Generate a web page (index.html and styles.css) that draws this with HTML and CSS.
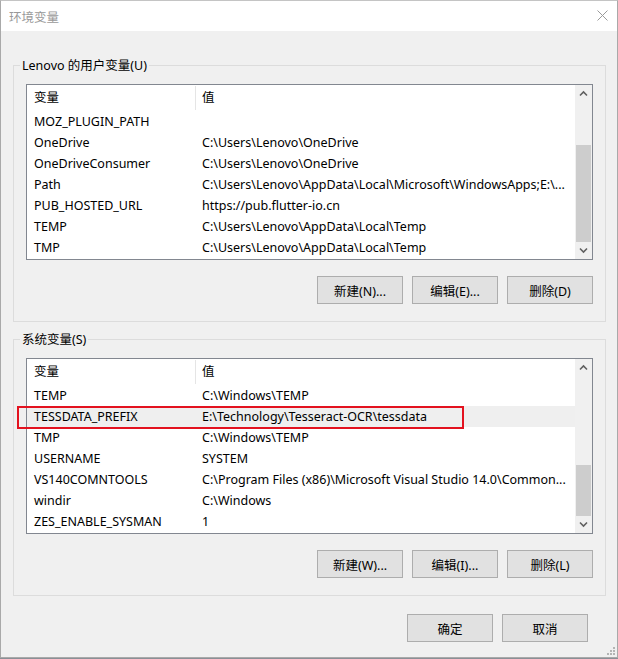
FILE: index.html
```html
<!DOCTYPE html>
<html lang="zh-CN">
<head>
<meta charset="utf-8">
<title>环境变量</title>
<link rel="stylesheet" href="styles.css">
</head>
<body>
<div class="window">
  <div class="titlebar">
    <span class="title">环境变量</span>
    <svg class="close" width="11" height="11" viewBox="0 0 11 11"><path d="M0.5 0.5L10.5 10.5M10.5 0.5L0.5 10.5" stroke="#9a9a9a" stroke-width="1" fill="none"/></svg>
  </div>
  <div class="content">
    <fieldset class="group">
      <legend>Lenovo 的用户变量(U)</legend>
      <div class="list">
        <div class="list-main">
          <div class="list-header"><div class="name">变量</div><div class="value">值</div></div>
          <div class="row"><div class="name">MOZ_PLUGIN_PATH</div><div class="value"></div></div>
          <div class="row"><div class="name">OneDrive</div><div class="value">C:\Users\Lenovo\OneDrive</div></div>
          <div class="row"><div class="name">OneDriveConsumer</div><div class="value">C:\Users\Lenovo\OneDrive</div></div>
          <div class="row"><div class="name">Path</div><div class="value">C:\Users\Lenovo\AppData\Local\Microsoft\WindowsApps;E:\...</div></div>
          <div class="row"><div class="name">PUB_HOSTED_URL</div><div class="value">https://pub.flutter-io.cn</div></div>
          <div class="row"><div class="name">TEMP</div><div class="value">C:\Users\Lenovo\AppData\Local\Temp</div></div>
          <div class="row"><div class="name">TMP</div><div class="value">C:\Users\Lenovo\AppData\Local\Temp</div></div>
        </div>
        <div class="scrollbar">
          <div class="arrow"><svg width="17" height="17" viewBox="0 0 17 17"><path d="M5 10.5L8.5 7L12 10.5" stroke="#606060" stroke-width="1.6" fill="none"/></svg></div>
          <div class="track"><div class="thumb" style="height:97px"></div></div>
          <div class="arrow"><svg width="17" height="17" viewBox="0 0 17 17"><path d="M5 6.5L8.5 10L12 6.5" stroke="#606060" stroke-width="1.6" fill="none"/></svg></div>
        </div>
      </div>
      <div class="buttons">
        <button class="btn">新建(N)...</button>
        <button class="btn">编辑(E)...</button>
        <button class="btn">删除(D)</button>
      </div>
    </fieldset>

    <fieldset class="group group-system">
      <legend>系统变量(S)</legend>
      <div class="list">
        <div class="list-main">
          <div class="list-header"><div class="name">变量</div><div class="value">值</div></div>
          <div class="row"><div class="name">TEMP</div><div class="value">C:\Windows\TEMP</div></div>
          <div class="row selected"><div class="name">TESSDATA_PREFIX</div><div class="value">E:\Technology\Tesseract-OCR\tessdata</div><div class="mark"></div></div>
          <div class="row"><div class="name">TMP</div><div class="value">C:\Windows\TEMP</div></div>
          <div class="row"><div class="name">USERNAME</div><div class="value">SYSTEM</div></div>
          <div class="row"><div class="name">VS140COMNTOOLS</div><div class="value">C:\Program Files (x86)\Microsoft Visual Studio 14.0\Common...</div></div>
          <div class="row"><div class="name">windir</div><div class="value">C:\Windows</div></div>
          <div class="row"><div class="name">ZES_ENABLE_SYSMAN</div><div class="value">1</div></div>
        </div>
        <div class="scrollbar">
          <div class="arrow"><svg width="17" height="17" viewBox="0 0 17 17"><path d="M5 10.5L8.5 7L12 10.5" stroke="#606060" stroke-width="1.6" fill="none"/></svg></div>
          <div class="track"><div class="thumb" style="height:51px"></div></div>
          <div class="arrow"><svg width="17" height="17" viewBox="0 0 17 17"><path d="M5 6.5L8.5 10L12 6.5" stroke="#606060" stroke-width="1.6" fill="none"/></svg></div>
        </div>
      </div>
      <div class="buttons">
        <button class="btn">新建(W)...</button>
        <button class="btn">编辑(I)...</button>
        <button class="btn">删除(L)</button>
      </div>
    </fieldset>
  </div>
  <div class="footer">
    <button class="btn">确定</button>
    <button class="btn">取消</button>
  </div>
  <svg class="grip" width="12" height="12" viewBox="0 0 12 12">
    <rect x="9" y="3" width="2" height="2" fill="#b4b4b4"/>
    <rect x="6" y="6" width="2" height="2" fill="#b4b4b4"/>
    <rect x="9" y="6" width="2" height="2" fill="#b4b4b4"/>
    <rect x="3" y="9" width="2" height="2" fill="#b4b4b4"/>
    <rect x="6" y="9" width="2" height="2" fill="#b4b4b4"/>
    <rect x="9" y="9" width="2" height="2" fill="#b4b4b4"/>
  </svg>
</div>
</body>
</html>
```

FILE: styles.css
```css
* {
  box-sizing: border-box;
}

html, body {
  margin: 0;
  padding: 0;
}

body {
  width: 618px;
  height: 659px;
  overflow: hidden;
  background: #8a8f96;
  font-family: "Noto Sans", "Noto Sans CJK SC", sans-serif;
  font-size: 12.5px;
  color: #000;
}

.window {
  position: relative;
  width: 618px;
  height: 658px;
  background: #f0f0f0;
  border: 1px solid #a9a9a9;
  border-top-color: #c4c4c4;
  display: flex;
  flex-direction: column;
}

.titlebar {
  height: 30px;
  flex: none;
  background: #fff;
  display: flex;
  align-items: center;
  justify-content: space-between;
  padding: 0 9px 0 8px;
}

.title {
  color: #999;
}

.close {
  display: block;
  margin-top: -1px;
}

.content {
  padding: 25px 11px 0 12px;
}

.group {
  margin: 0;
  padding: 10px 12px 17px 12px;
  border: 1px solid #dcdcdc;
  min-width: 0;
}

.group-system {
  margin-top: 8px;
}

.group legend {
  margin-left: -6px;
  padding: 2px 2px 0 2px;
  line-height: 16px;
}

.list {
  height: 176px;
  border: 1px solid #828790;
  background: #fff;
  display: flex;
}

.list-main {
  flex: 1;
  min-width: 0;
}

.list-header {
  height: 26px;
  display: flex;
}

.list-header .name,
.list-header .value {
  line-height: 24px;
  margin-top: 1px;
  height: 24px;
}

.list-header .name {
  border-right: 1px solid #e5e5e5;
}

.row {
  position: relative;
  height: 21px;
  line-height: 21px;
  display: flex;
}

.name {
  width: 169px;
  flex: none;
  padding-left: 7px;
  white-space: nowrap;
  overflow: hidden;
}

.value {
  flex: 1;
  min-width: 0;
  padding-left: 6px;
  white-space: nowrap;
  overflow: hidden;
}

.row.selected {
  background: #efefef;
}

.mark {
  position: absolute;
  left: -10px;
  top: 0;
  width: 447px;
  height: 23px;
  border: 2px solid #e3121f;
}

.scrollbar {
  width: 17px;
  flex: none;
  background: #f0f0f0;
  display: flex;
  flex-direction: column;
}

.arrow {
  height: 17px;
  flex: none;
}

.arrow svg {
  display: block;
}

.track {
  flex: 1;
  display: flex;
  flex-direction: column;
  justify-content: flex-end;
}

.thumb {
  background: #cdcdcd;
  margin: 0 1px;
}

.buttons {
  margin-top: 16px;
  display: flex;
  justify-content: flex-end;
  gap: 9px;
}

.btn {
  width: 86px;
  height: 28px;
  padding: 0;
  margin: 0;
  background: #e1e1e1;
  border: 1px solid #adadad;
  font-family: inherit;
  font-size: 12.5px;
  color: #000;
}

.footer {
  margin-top: 18px;
  padding-right: 29px;
  display: flex;
  justify-content: flex-end;
  gap: 9px;
}

.grip {
  position: absolute;
  right: 1px;
  bottom: 1px;
}
```
